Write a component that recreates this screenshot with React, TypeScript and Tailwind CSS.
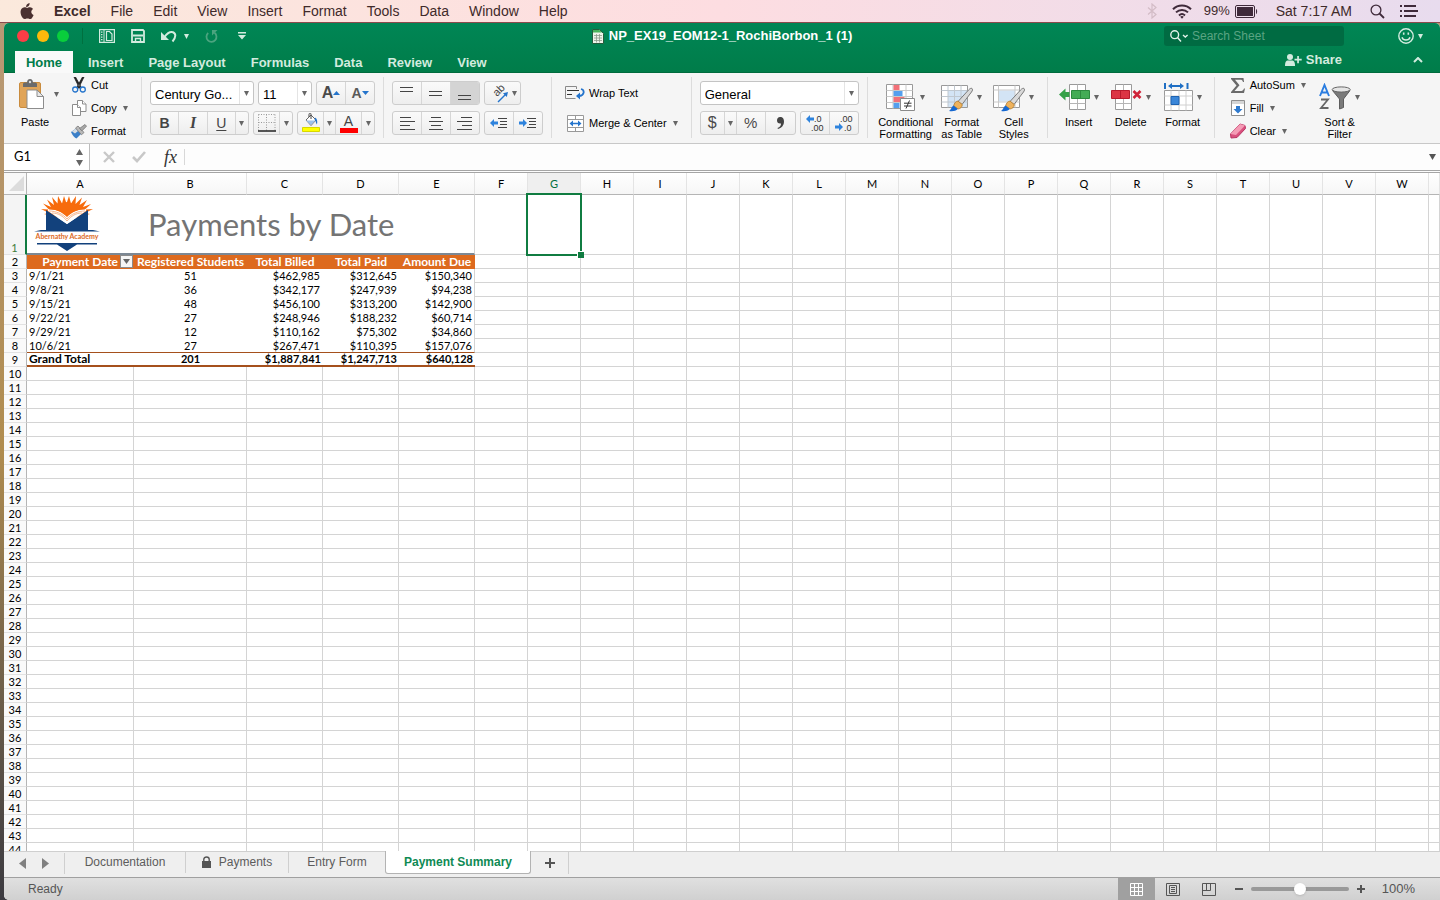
import React from 'react'

const menus = ['File', 'Edit', 'View', 'Insert', 'Format', 'Tools', 'Data', 'Window', 'Help']
const ribbonTabs = ['Insert', 'Page Layout', 'Formulas', 'Data', 'Review', 'View']
const extraColumns = 'FGHIJKLMNOPQRSTUVW'.split('')
const columns = ['A', 'B', 'C', 'D', 'E', ...extraColumns, '']

const payments = [
  ['9/1/21', '51', '$462,985', '$312,645', '$150,340'],
  ['9/8/21', '36', '$342,177', '$247,939', '$94,238'],
  ['9/15/21', '48', '$456,100', '$313,200', '$142,900'],
  ['9/22/21', '27', '$248,946', '$188,232', '$60,714'],
  ['9/29/21', '12', '$110,162', '$75,302', '$34,860'],
  ['10/6/21', '27', '$267,471', '$110,395', '$157,076'],
]
const total = ['Grand Total', '201', '$1,887,841', '$1,247,713', '$640,128']
const emptyRows = Array.from({ length: 35 }, (_, i) => i + 10)

const Arrow: React.FC<{ className?: string }> = ({ className = 'text-[#666]' }) => (
  <svg className={`w-[5px] h-[5px] shrink-0 ${className}`} viewBox="0 0 5 5" fill="currentColor" aria-hidden="true">
    <path d="M0 0h5L2.5 5z" />
  </svg>
)

/* Menu bar */

const AppleIcon = () => (
  <svg width="14" height="17" viewBox="0 0 14 17" fill="#4a3030" aria-hidden="true">
    <path d="M9.6 0c.1 1.300-.4 2.300-1 3-.7.800-1.600 1.200-2.500 1.100C6 2.900 6.500 2 7.100 1.300 7.800.6 8.700.1 9.600 0z" />
    <path d="M7.200 5c.6 0 1.500-.8 2.900-.7 1.100.1 2.200.6 2.900 1.600-2.500 1.600-2.100 5 .6 6-.6 1.600-1.800 4-3.200 4.100-1.100.1-1.500-.6-2.900-.6s-1.800.6-2.900.6C2.900 15.900.8 12.600.6 9.700.4 6.600 2.200 4.400 4.500 4.300 5.800 4.300 6.600 5 7.200 5z" />
  </svg>
)

const MenuBar = () => (
  <header className="h-[23px] shrink-0 flex items-center pl-5 pr-[22px] border-b border-[#8a4a4c] bg-linear-to-r from-[#fbe9dc] via-[#fddde1] to-[#e8dcee] text-sm text-[#3f2a2a]">
    <button aria-label="Apple menu"><AppleIcon /></button>
    <nav className="flex items-center gap-5 ml-5">
      <button className="font-bold">Excel</button>
      {menus.map((m) => (
        <button key={m}>{m}</button>
      ))}
    </nav>
    <div className="ml-auto flex items-center">
      <svg width="10" height="16" viewBox="0 0 10 16" fill="none" stroke="#d3bcc6" strokeWidth="1.200" aria-hidden="true">
        <path d="M1 4.500l8 7L5 15V1l4 3.500-8 7" />
      </svg>
      <svg className="ml-[15px]" width="20" height="15" viewBox="0 0 20 15" fill="none" stroke="#3f2a3a" strokeWidth="2" aria-hidden="true">
        <path d="M1 5.200c5-5 13-5 18 0M4 8.400c3.400-3.300 8.600-3.300 12 0M7 11.400c1.800-1.600 4.200-1.600 6 0" />
        <path d="M8.200 12.700L10 14.800l1.800-2.100c-1-.9-2.600-.9-3.600 0z" fill="#3f2a3a" stroke="none" />
      </svg>
      <span className="ml-3 text-[13px]">99%</span>
      <svg className="ml-[5px]" width="23" height="13" viewBox="0 0 23 13" aria-hidden="true">
        <rect x=".5" y=".5" width="19" height="12" rx="1.500" fill="none" stroke="#3f2a3a" />
        <rect x="2" y="2" width="16" height="9" fill="#3f2a3a" />
        <path d="M21 4c1.500.5 1.500 4.500 0 5z" fill="#3f2a3a" />
      </svg>
      <span className="ml-[18px]">Sat 7:17 AM</span>
      <button className="ml-[18px]" aria-label="Spotlight">
        <svg width="15" height="15" viewBox="0 0 15 15" fill="none" stroke="#3f2a3a" strokeWidth="1.300">
          <circle cx="6" cy="6" r="4.900" />
          <path d="M9.500 9.500L14 14" strokeWidth="1.800" />
        </svg>
      </button>
      <button className="ml-[15px]" aria-label="Notification Center">
        <svg width="18" height="12" viewBox="0 0 18 12" fill="#3f2a3a">
          <path d="M0 0h2v2H0zM4 0h12v2H4zM0 5h2v2H0zM4 5h14v2H4zM0 10h2v2H0zM4 10h12v2H4z" />
        </svg>
      </button>
    </div>
  </header>
)

/* Title bar and ribbon tabs */

const TitleBar = () => (
  <div className="h-7 pb-[2px] grid grid-cols-[1fr_auto_1fr] items-center text-[#d3ebdf]">
    <div className="flex items-center pl-[13px]">
      <div className="flex gap-2">
        <button aria-label="Close" className="w-3 h-3 rounded-full bg-[#fc3d46]" />
        <button aria-label="Minimize" className="w-3 h-3 rounded-full bg-[#fdb90b]" />
        <button aria-label="Zoom" className="w-3 h-3 rounded-full bg-[#09ce3c]" />
      </div>
      <span className="w-px h-4 ml-[13px] bg-[#00703f]" />
      <button className="ml-4" aria-label="Workbook gallery">
        <svg width="16" height="14" viewBox="0 0 16 14">
          <path d="M.6.6h14.800v12.800H.6z" fill="none" stroke="currentColor" strokeWidth="1.200" />
          <path d="M5 1v12" stroke="currentColor" strokeWidth="1" />
          <path d="M2 2.500h1.500v1.300H2zM2 5h1.500v1.300H2zM2 7.500h1.500v1.300H2zM2 10h1.500v1.300H2z" fill="currentColor" />
          <path d="M7.500 2.500h3l2.500 2.500v6.500H7.500z" fill="none" stroke="currentColor" strokeWidth="1.200" />
        </svg>
      </button>
      <button className="ml-4" aria-label="Save">
        <svg width="14" height="14" viewBox="0 0 14 14" fill="none" stroke="currentColor" strokeWidth="1.800">
          <path d="M1 1h11l1 1v11H1z" />
          <path d="M2 6.500h10" />
          <path d="M4.500 13V9.500h5V13" strokeWidth="1.400" />
        </svg>
      </button>
      <button className="ml-4" aria-label="Undo">
        <svg width="16" height="13" viewBox="0 0 16 13">
          <path d="M0 2v8h8z" fill="currentColor" />
          <path d="M3.500 7C6 3.500 9 1.200 12 2.200c3 1.200 3.200 5-.5 9.300" fill="none" stroke="currentColor" strokeWidth="2" />
        </svg>
      </button>
      <Arrow className="ml-[7px] text-[#d3ebdf]" />
      <button className="ml-4 text-[#4ba47f]" aria-label="Repeat">
        <svg width="13" height="13" viewBox="0 0 13 13">
          <path d="M3.200 3A5 5 0 1 0 9.500 2.800" fill="none" stroke="currentColor" strokeWidth="1.800" />
          <path d="M7 0h5.500L7 5.500z" fill="currentColor" />
        </svg>
      </button>
      <button className="ml-5" aria-label="Customize toolbar">
        <svg width="8" height="8" viewBox="0 0 8 8" fill="currentColor">
          <path d="M0 0h8v1.500H0zM0 3h8L4 7.500z" />
        </svg>
      </button>
    </div>
    <div className="flex items-center gap-[5px] text-white">
      <svg width="12" height="15" viewBox="0 0 12 15" aria-hidden="true">
        <path d="M.5.5h7l4 4v10H.5z" fill="#eef3ea" stroke="#245c3c" />
        <path d="M1 1h6.500L10 3.500H1z" fill="#47b45b" />
        <path d="M2 6.500h8M2 9h8M2 11.500h8M4.500 5v8.500M7.500 5v8.500" stroke="#8c9a8c" strokeWidth=".8" />
      </svg>
      <h1 className="text-[13px] font-bold">NP_EX19_EOM12-1_RochiBorbon_1 (1)</h1>
    </div>
    <div className="flex items-center justify-end pr-[17px]">
      <label className="flex items-center w-[180px] h-5 pl-[6px] rounded-[3px] bg-[#006b42]">
        <svg className="shrink-0" width="19" height="12" viewBox="0 0 19 12" fill="none" stroke="#e2f2ea" strokeWidth="1.400" aria-hidden="true">
          <circle cx="4.700" cy="4.700" r="3.900" />
          <path d="M7.500 7.500L11 11.500M13 5l2.300 2L17.600 5" />
        </svg>
        <input aria-label="Search Sheet" placeholder="Search Sheet" className="w-full ml-[3px] bg-transparent text-xs outline-none placeholder:text-[#5aa482]" />
      </label>
      <button className="ml-[54px] flex items-center gap-1" aria-label="Feedback">
        <svg width="16" height="16" viewBox="0 0 16 16" fill="none" stroke="currentColor" strokeWidth="1.400">
          <circle cx="8" cy="8" r="7.200" />
          <path d="M4 9.200c1 3.700 7 3.700 8 0" />
          <path d="M5.700 4.500v2.200M10.300 4.500v2.200" strokeWidth="1.600" />
        </svg>
        <Arrow className="text-[#d3ebdf]" />
      </button>
    </div>
  </div>
)

const TabStrip = () => (
  <div className="h-[22px] flex items-stretch pl-[11px] pr-[17px] text-[13px] font-bold text-[#d3ebdf] border-b border-[#006b3d]">
    <button className="w-[58px] pt-[2px] -mb-px mr-[3px] bg-[#f9f9f9] text-[#007c49]">Home</button>
    <nav className="flex gap-px">
      {ribbonTabs.map((t) => (
        <button key={t} className="px-3 pt-[2px]">{t}</button>
      ))}
    </nav>
    <button className="ml-auto mb-1 flex items-center gap-1">
      <svg width="17" height="12" viewBox="0 0 17 12" fill="currentColor" aria-hidden="true">
        <circle cx="5" cy="3" r="3" />
        <path d="M0 12c0-4 1-5.500 3-5.500h4c2 0 3 1.500 3 5.500z" />
        <path d="M12.200 2h1.700v2.800h2.800v1.700h-2.800v2.800h-1.700V6.500H9.500V4.800h2.700z" />
      </svg>
      Share
    </button>
    <button className="ml-[71px] mb-1" aria-label="Collapse ribbon">
      <svg width="10" height="6" viewBox="0 0 10 6" fill="none" stroke="currentColor" strokeWidth="2">
        <path d="M1 5l4-4 4 4" />
      </svg>
    </button>
  </div>
)

/* Ribbon building blocks */

const Group: React.FC<{ className?: string; children: React.ReactNode }> = ({ className = '', children }) => (
  <div className={`h-[61px] shrink-0 flex border-r border-[#dcdcdc] ${className}`}>{children}</div>
)

const Box: React.FC<{ className?: string; children: React.ReactNode }> = ({ className = '', children }) => (
  <div className={`h-6 flex items-stretch rounded-[3px] border border-[#cdcdcd] bg-linear-to-b from-[#fafafa] to-[#eeeeee] divide-x divide-[#d6d6d6] ${className}`}>
    {children}
  </div>
)

const Tool: React.FC<{ label: string; className?: string; children: React.ReactNode }> = ({ label, className = 'flex-1', children }) => (
  <button aria-label={label} title={label} className={`flex items-center justify-center ${className}`}>
    {children}
  </button>
)

const Drop: React.FC<{ label: string }> = ({ label }) => (
  <Tool label={label} className="w-3">
    <Arrow />
  </Tool>
)

const Picker: React.FC<{ label: string; value: string; className: string }> = ({ label, value, className }) => (
  <div className={`relative h-6 rounded-[3px] border border-[#c4c4c4] bg-white ${className}`}>
    <select aria-label={label} className="appearance-none w-full h-full pl-1 pr-4 pb-[2px] text-[13px] text-black outline-none">
      <option>{value}</option>
    </select>
    <span className="absolute right-0 top-0 h-full w-[14px] flex items-center justify-center border-l border-[#e4e4e4] pointer-events-none">
      <Arrow />
    </span>
  </div>
)

const BigTool: React.FC<{ lines: string[]; className?: string; icon: React.ReactNode }> = ({ lines, className = 'w-[52px]', icon }) => (
  <button className={`shrink-0 flex flex-col items-center justify-start pt-[5px] ${className}`}>
    <span className="h-[30px] mb-1 shrink-0 flex items-center gap-1">
      {icon}
      <Arrow />
    </span>
    {lines.map((l) => (
      <span key={l} className="text-[11px] leading-[12px] whitespace-nowrap">{l}</span>
    ))}
  </button>
)

const RowTool: React.FC<{ label: string; arrow?: boolean; wide?: boolean; icon: React.ReactNode }> = ({ label, arrow, wide, icon }) => (
  <button className="h-4 flex items-center text-[11px] whitespace-nowrap">
    <span className={`flex justify-center mr-1 ${wide ? 'w-5' : 'w-4'}`}>{icon}</span>
    {label}
    {arrow && <Arrow className="ml-[6px] text-[#666]" />}
  </button>
)

const Lines: React.FC<{ d: string }> = ({ d }) => (
  <svg width="16" height="14" viewBox="0 0 16 14" stroke="#444" fill="none" aria-hidden="true">
    <path d={d} />
  </svg>
)

const BlueArrow: React.FC<{ x: number; y: number; right?: boolean }> = ({ x, y, right }) => (
  <path
    d={right ? `M${x + 8} ${y}l-4-4v2.500h-4v3h4V${y + 4}z` : `M${x} ${y}l4-4v2.500h4v3h-4V${y + 4}z`}
    fill="#2e83dd"
  />
)

/* Ribbon icons */

const PasteIcon = () => (
  <svg width="26" height="30" viewBox="0 0 26 30">
    <rect x=".5" y="3.500" width="21" height="25" rx="1.500" fill="#e0a458" stroke="#c98b3d" />
    <path d="M4 8V5c0-1 1-1.500 2.500-1.500H8C8 1 9.500 0 11 0s3 1 3 3.500h1.500C17 3.500 18 4 18 5v3z" fill="#6b6b6b" />
    <circle cx="11" cy="3" r="1.200" fill="#ddd" />
    <path d="M8 11h10l6.500 6.500V29.500H8z" fill="#fff" stroke="#8d8d8d" />
    <path d="M18 11v6.500h6.500z" fill="#e8e8e8" stroke="#8d8d8d" />
  </svg>
)

const CutIcon = () => (
  <svg width="14" height="16" viewBox="0 0 14 16" fill="none">
    <path d="M2 0l1.500 0 5.500 10-1.500 1.200zM12 0l-1.500 0L5 10l1.500 1.200z" fill="#222" stroke="#222" strokeWidth=".8" />
    <circle cx="3.200" cy="12.500" r="2.500" stroke="#2474cc" strokeWidth="1.300" />
    <circle cx="10.800" cy="12.500" r="2.500" stroke="#2474cc" strokeWidth="1.300" />
  </svg>
)

const CopyIcon = () => (
  <svg width="15" height="16" viewBox="0 0 15 16" fill="#fff" stroke="#8c8c8c">
    <path d="M5.500.5h5l3.500 3.500v7.500H5.500z" />
    <path d="M10.500.5V4H14" />
    <path d="M.5 4.500h5l3 3v8h-8z" />
    <path d="M5.500 4.500v3h3" />
  </svg>
)

const BrushIcon = () => (
  <svg width="16" height="15" viewBox="0 0 16 15">
    <path d="M0 8l5-3.500 5 5.500-4.500 4.500C3.500 14 2 12 0 8z" fill="#3b7fc8" />
    <path d="M1 7.500L5 4.500l2 2.500-3 2.500z" fill="#d7dde3" />
    <path d="M4.500 4L7 2l6 6.500-2.500 2.200z" fill="#b9b9b9" stroke="#777" strokeWidth=".8" />
    <path d="M8.500 4.500L14 .5l1.500 1.700-4.500 4.600z" fill="#a8a8a8" stroke="#777" strokeWidth=".8" />
  </svg>
)

const PaintBrush = () => (
  <g>
    <path d="M31 5.500c1 .7.600 2-.5 3.500L21 21.500l-4-3L27.500 7c1.500-1.500 2.600-2.100 3.500-1.500z" fill="#d9d9d9" stroke="#7a7a7a" />
    <path d="M17 18l4.300 3.600c-.3 2.700-1.800 4-4.300 4.400l-4.300-3.200c.6-2.800 2-4.400 4.300-4.800z" fill="#eeb25c" stroke="#b07a2c" strokeWidth=".8" />
    <path d="M12.500 22.500l4.300 3.500c-2 2-5 2.700-8.800 2 2-1 2.300-4 4.500-5.500z" fill="#1668d0" />
  </g>
)

const ConditionalIcon = () => (
  <svg width="30" height="29" viewBox="0 0 30 29">
    <path d="M.5 1.500h26v24H.5z" fill="#fff" stroke="#9a9a9a" />
    <path d="M.5 7.500h26M.5 13.500h26M.5 19.500h26M7 1.500v24M20 1.500v24" stroke="#c9c9c9" fill="none" />
    <path d="M7.500 2h6v5h-6z" fill="#f27078" />
    <path d="M7.500 8h9v5h-9z" fill="#559fee" />
    <path d="M7.500 14h11v5h-11z" fill="#f27078" />
    <path d="M7.500 20h6v5h-6z" fill="#559fee" />
    <path d="M14.500 15.500h14v12h-14z" fill="#fff" stroke="#8a8a8a" />
    <path d="M18 20.200h7.500M18 23h7.500M23.500 17.500l-3.500 8" stroke="#333" fill="none" />
  </svg>
)

const FormatTableIcon = () => (
  <svg width="32" height="29" viewBox="0 0 32 29">
    <path d="M.5 2.500h26v22H.5z" fill="#fff" stroke="#9a9a9a" />
    <path d="M7 8h19v16H7z" fill="#d3e4f5" />
    <path d="M.5 7.500h26M.5 13.500h26M.5 19h26M7 2.500v22M13.500 2.500v22M20 2.500v22" stroke="#c0c8d0" fill="none" />
    <PaintBrush />
  </svg>
)

const CellStylesIcon = () => (
  <svg width="32" height="29" viewBox="0 0 32 29">
    <path d="M.5 2.500h26v22H.5z" fill="#fff" stroke="#9a9a9a" />
    <path d="M6 7.500h16v11H6z" fill="#d3e4f5" />
    <path d="M.5 7h26M.5 19h26M5.500 2.500v22M22 2.500v22" stroke="#c9c9c9" fill="none" />
    <PaintBrush />
  </svg>
)

const InsertIcon = () => (
  <svg width="31" height="29" viewBox="0 0 31 29">
    <path d="M10.500 1.500h16v25h-16z" fill="#fff" stroke="#9a9a9a" />
    <path d="M18.500 1.500v25M10.500 20.500h16" stroke="#b5b5b5" />
    <path d="M12.500 7.500h18v8h-18z" fill="#43ac55" stroke="#2c8a3e" />
    <path d="M21.500 7.500v8" stroke="#2c8a3e" />
    <path d="M0 11.500L6.500 5.500v3.500h4v5h-4v3.500z" fill="#35a148" />
  </svg>
)

const DeleteIcon = () => (
  <svg width="31" height="29" viewBox="0 0 31 29">
    <path d="M4.500 1.500h16v25h-16z" fill="#fff" stroke="#9a9a9a" />
    <path d="M12.500 1.500v25M4.500 20.500h16" stroke="#b5b5b5" />
    <path d="M.5 7.500h18v8H.5z" fill="#dc3545" stroke="#b81c2e" />
    <path d="M9.500 7.500v8" stroke="#b81c2e" />
    <path d="M22.500 8l7 7M29.500 8l-7 7" stroke="#cf2338" strokeWidth="2.600" />
  </svg>
)

const FormatIcon = () => (
  <svg width="29" height="29" viewBox="0 0 29 29">
    <path d="M1 0v6M23.500 0v6" stroke="#1f6fc4" strokeWidth="2" />
    <path d="M4 3l4-3v2h8V0l4 3-4 3V4H8v2z" fill="#1f6fc4" />
    <path d="M.5 7.500h28v20H.5z" fill="#fff" stroke="#9a9a9a" />
    <path d="M.5 13h28M.5 22h28M7 7.500v20M15 7.500v20M22 7.500v20" stroke="#d0d0d0" fill="none" />
    <path d="M7 13.500h8v8H7z" fill="#3a86d8" stroke="#1f63b0" />
  </svg>
)

const SortIcon = () => (
  <svg width="32" height="28" viewBox="0 0 32 28">
    <path d="M1 13L5.500 2l4.500 11M2.700 9.500h5.600" fill="none" stroke="#2b7de0" strokeWidth="1.900" />
    <path d="M2 16.500h7L2 25h7.500" fill="none" stroke="#666" strokeWidth="1.800" />
    <path d="M13.500 7.500h17.500l-6.500 8.500v8.500l-4 1.500V16z" fill="#7a7a7a" stroke="#5d5d5d" />
    <ellipse cx="22.200" cy="6.500" rx="9" ry="2.600" fill="#e5e5e5" stroke="#666" />
  </svg>
)

const Ribbon = () => (
  <div className="h-[71px] shrink-0 flex pt-1 overflow-hidden border-b border-[#c8c8c8] bg-[#f5f5f5] text-black">
    <Group className="w-[138px] pl-[13px]">
      <button className="w-[42px] flex flex-col items-start pt-[2px] mr-3">
        <span className="flex items-center gap-[9px] mb-[7px] pl-[2px]">
          <PasteIcon />
          <Arrow />
        </span>
        <span className="text-[11px] leading-[12px] pl-1">Paste</span>
      </button>
      <div className="flex flex-col gap-[7px]">
        <RowTool label="Cut" icon={<CutIcon />} />
        <RowTool label="Copy" arrow icon={<CopyIcon />} />
        <RowTool label="Format" icon={<BrushIcon />} />
      </div>
    </Group>

    <Group className="px-2 pt-1 flex-col gap-[6px]">
      <div className="flex gap-1">
        <Picker label="Font" value="Century Go..." className="w-[104px]" />
        <Picker label="Font size" value="11" className="w-[54px]" />
        <Box className="w-[59px]">
          <Tool label="Increase font size">
            <span className="text-base font-bold text-[#4a4a4a]">A</span>
            <svg width="7" height="4" viewBox="0 0 7 4" fill="#2474cc"><path d="M0 4h7L3.500 0z" /></svg>
          </Tool>
          <Tool label="Decrease font size">
            <span className="text-sm font-bold text-[#5a5a5a]">A</span>
            <svg width="7" height="4" viewBox="0 0 7 4" fill="#2474cc"><path d="M0 0h7L3.500 4z" /></svg>
          </Tool>
        </Box>
      </div>
      <div className="flex gap-1 text-[#444]">
        <Box className="w-[99px]">
          <Tool label="Bold"><span className="text-sm font-bold">B</span></Tool>
          <Tool label="Italic"><span className="font-['Liberation_Serif',serif] text-base italic font-bold">I</span></Tool>
          <Tool label="Underline"><span className="text-sm underline underline-offset-2">U</span></Tool>
          <Drop label="Underline style" />
        </Box>
        <Box className="w-10">
          <Tool label="Borders">
            <svg width="18" height="18" viewBox="0 0 18 18" fill="none">
              <path d="M.5 .5h17M.5 8.500h17M.5 .5v16M8.500 .5v16M17 .5v16" stroke="#999" strokeDasharray="1 1.500" />
              <path d="M0 17h18" stroke="#222" strokeWidth="1.500" />
            </svg>
          </Tool>
          <Drop label="Border style" />
        </Box>
        <Box className="w-[78px]">
          <Tool label="Fill color">
            <svg width="18" height="20" viewBox="0 0 18 20">
              <path d="M4 7l5-5 5 5-5 5.500z" fill="#fff" stroke="#666" />
              <path d="M4 7.500h9.500L9 12z" fill="#9dc3ec" />
              <path d="M9 6V1.500C9-.5 7-.2 7 1.500V4" fill="none" stroke="#444" />
              <path d="M13 4.500c2 1 2.700 3.500 2 7-1.500-1.500-1-4-2.500-5z" fill="#2474cc" />
              <path d="M.5 14.500h17v4H.5z" fill="#ff0" stroke="#d8d800" />
            </svg>
          </Tool>
          <Drop label="Fill color options" />
          <Tool label="Font color">
            <span className="flex flex-col items-center">
              <span className="text-sm leading-[14px]">A</span>
              <span className="w-[18px] h-[5px] bg-[#f00]" />
            </span>
          </Tool>
          <Drop label="Font color options" />
        </Box>
      </div>
    </Group>

    <Group className="px-2 pt-1 flex-col gap-[6px]">
      <div className="flex gap-1">
        <Box className="w-[88px]">
          <Tool label="Top align"><Lines d="M1 1.500h13M1 5.500h13" /></Tool>
          <Tool label="Middle align"><Lines d="M1 5.500h13M1 9.500h13" /></Tool>
          <Tool label="Bottom align" className="flex-1 rounded-r-[2px] bg-[#d4d4d4]"><Lines d="M1 9.500h13M1 13.500h13" /></Tool>
        </Box>
        <button aria-label="Orientation" className="w-[37px] h-6 flex items-center justify-center gap-[3px] rounded-[3px] border border-[#cdcdcd] bg-linear-to-b from-[#fafafa] to-[#eeeeee]">
          <svg className="overflow-visible" width="20" height="20" viewBox="0 0 20 20">
            <text transform="translate(8 14) rotate(-45)" fontSize="11" fill="#444">ab</text>
            <path d="M9 19l7.500-7.500" stroke="#2474cc" strokeWidth="1.500" />
            <path d="M19 9l-1.200 5-3.800-3.800z" fill="#2474cc" />
          </svg>
          <Arrow />
        </button>
      </div>
      <div className="flex gap-1">
        <Box className="w-[88px]">
          <Tool label="Align left"><Lines d="M1 1.500h11M1 5.500h15M1 9.500h10M1 13.500h15" /></Tool>
          <Tool label="Center"><Lines d="M3 1.500h10M1 5.500h14M3 9.500h10M1 13.500h14" /></Tool>
          <Tool label="Align right"><Lines d="M4 1.500h11M0 5.500h15M5 9.500h10M0 13.500h15" /></Tool>
        </Box>
        <Box className="w-[59px]">
          <Tool label="Decrease indent">
            <svg width="18" height="12" viewBox="0 0 18 12" fill="none">
              <path d="M8 1.500h9M10 4.500h7M10 7.500h7M8 10.500h9" stroke="#444" />
              <BlueArrow x={0} y={6} />
            </svg>
          </Tool>
          <Tool label="Increase indent">
            <svg width="18" height="12" viewBox="0 0 18 12" fill="none">
              <path d="M8 1.500h9M10 4.500h7M10 7.500h7M8 10.500h9" stroke="#444" />
              <BlueArrow x={0} y={6} right />
            </svg>
          </Tool>
        </Box>
      </div>
    </Group>

    <Group className="px-[13px] pt-2 flex-col gap-[14px]">
      <RowTool
        wide
        label="Wrap Text"
        icon={
          <svg width="20" height="14" viewBox="0 0 20 14" fill="none">
            <path d="M11.500 3V.5H.5v12h10" stroke="#8a8a8a" />
            <path d="M2 4.500h12M2 8.500h5" stroke="#333" />
            <path d="M16 3c4 1 3.500 6.500-1.500 7" stroke="#2474cc" strokeWidth="1.800" />
            <path d="M11 10l4-3.500v7z" fill="#2474cc" />
          </svg>
        }
      />
      <RowTool
        wide
        arrow
        label="Merge & Center"
        icon={
          <svg width="17" height="17" viewBox="0 0 17 17" fill="none">
            <path d="M.5.5h16v16H.5z" fill="#fff" stroke="#999" />
            <path d="M.5 4.500h16M.5 12.500h16M8.500.5v4M8.500 12.500v4" stroke="#999" />
            <path d="M4 8.500h9" stroke="#2474cc" strokeWidth="1.400" />
            <path d="M2.500 8.500l3.500-3v6zM14.500 8.500l-3.500-3v6z" fill="#2474cc" />
          </svg>
        }
      />
    </Group>

    <Group className="px-2 pt-1 flex-col gap-[6px]">
      <Picker label="Number format" value="General" className="w-[159px]" />
      <div className="flex gap-1 text-[#4a4a4a]">
        <Box className="w-[96px]">
          <Tool label="Accounting format"><span className="text-base">$</span></Tool>
          <Drop label="Accounting options" />
          <Tool label="Percent style" className="w-[29px]"><span className="text-[15px]">%</span></Tool>
          <Tool label="Comma style" className="w-[29px]">
            <svg width="7" height="12" viewBox="0 0 7 12" fill="#444"><path d="M3 0c3 0 4 2 4 4.500C7 8.500 4.500 11 1 12l-.5-1C3 10 4 8.500 4 6.500 1.500 7 0 5.500 0 3.500 0 1.500 1.200 0 3 0z" /></svg>
          </Tool>
        </Box>
        <Box className="w-[59px]">
          <Tool label="Increase decimal">
            <svg width="20" height="18" viewBox="0 0 20 18" fill="#333" fontSize="9">
              <BlueArrow x={1} y={5} />
              <text x="9" y="8">.0</text>
              <text x="6" y="17">.00</text>
            </svg>
          </Tool>
          <Tool label="Decrease decimal">
            <svg width="20" height="18" viewBox="0 0 20 18" fill="#333" fontSize="9">
              <BlueArrow x={1} y={13} right />
              <text x="6" y="8">.00</text>
              <text x="10" y="17">.0</text>
            </svg>
          </Tool>
        </Box>
      </div>
    </Group>

    <Group className="pl-2 pr-[7px]">
      <BigTool className="w-[60px]" lines={['Conditional', 'Formatting']} icon={<ConditionalIcon />} />
      <BigTool lines={['Format', 'as Table']} icon={<FormatTableIcon />} />
      <BigTool lines={['Cell', 'Styles']} icon={<CellStylesIcon />} />
    </Group>

    <Group className="px-[5px]">
      <BigTool lines={['Insert']} icon={<InsertIcon />} />
      <BigTool lines={['Delete']} icon={<DeleteIcon />} />
      <BigTool lines={['Format']} icon={<FormatIcon />} />
    </Group>

    <div className="flex shrink-0 pl-[15px]">
      <div className="w-[84px] flex flex-col items-start gap-[7px]">
        <RowTool
          arrow
          label="AutoSum"
          icon={
            <svg width="14" height="15" viewBox="0 0 14 15">
              <path d="M0 0h12.500l.5 4h-1c-.5-1.700-1-2.200-3-2.200H4l4.500 5.400L3.500 13H9c2.500 0 3.200-.6 4-2.500h1L13 15H0v-1l5.500-6.500L0 1z" fill="#6a6a6a" />
            </svg>
          }
        />
        <RowTool
          arrow
          label="Fill"
          icon={
            <svg width="14" height="16" viewBox="0 0 14 16">
              <path d="M.5.5h13v15H.5z" fill="#fff" stroke="#8f8f8f" />
              <path d="M1 1h12v3H1z" fill="#d5d5d5" />
              <path d="M5 6h4v3h2.500L7 13.500 2.500 9H5z" fill="#2f7ace" />
            </svg>
          }
        />
        <RowTool
          arrow
          label="Clear"
          icon={
            <svg width="16" height="16" viewBox="0 0 16 16">
              <path d="M10 1l5 1.500.5 3L7 14.500 1 15l-.5-4z" fill="#d94f7d" stroke="#b83463" />
              <path d="M10 1l5 1.500L6 12 .5 11z" fill="#f49bb5" />
            </svg>
          }
        />
      </div>
      <BigTool lines={['Sort &', 'Filter']} icon={<SortIcon />} />
    </div>
  </div>
)

const FormulaBar = () => (
  <div className="h-[29px] shrink-0 flex items-stretch bg-[#fdfdfd] border-b-[3px] border-double border-[#a5a5a5]">
    <div className="w-[86px] flex items-center justify-between pl-[10px] pr-[6px] border-r border-[#bcbcbc] bg-white">
      <input aria-label="Name Box" defaultValue="G1" className="w-12 font-['Lato',sans-serif] text-[13px] text-black outline-none" />
      <svg width="7" height="17" viewBox="0 0 7 17" fill="#666" aria-hidden="true">
        <path d="M0 6h7L3.500 0zM0 11h7l-3.500 6z" />
      </svg>
    </div>
    <button className="ml-[13px]" aria-label="Cancel">
      <svg width="12" height="12" viewBox="0 0 12 12" stroke="#c8c8c8" strokeWidth="2.400" fill="none"><path d="M1 1l10 10M11 1L1 11" /></svg>
    </button>
    <button className="ml-[17px]" aria-label="Enter">
      <svg width="14" height="12" viewBox="0 0 14 12" stroke="#c8c8c8" strokeWidth="2.600" fill="none"><path d="M1 6l4 4L13 1" /></svg>
    </button>
    <button className="ml-[18px] font-['Liberation_Serif',serif] italic text-lg leading-none text-[#333]" aria-label="Insert function">fx</button>
    <span className="w-px h-4 self-center ml-[7px] bg-[#d8d8d8]" />
    <input aria-label="Formula" className="flex-1 min-w-0 px-2 text-sm outline-none" />
    <button className="w-4 flex items-center justify-center" aria-label="Expand formula bar">
      <svg width="7" height="6" viewBox="0 0 7 6" fill="#555"><path d="M0 0h7L3.500 6z" /></svg>
    </button>
  </div>
)

/* Worksheet */

const AcademyLogo = () => (
  <svg width="76" height="57" viewBox="0 0 76 57" role="img" aria-label="Abernathy Academy">
    <path
      d="M38 25L15 19l5-1-8-4 8 .5-6-6 8 3.500-4-7.500 7 5.500-2-8 5.500 6.500L29 1l4 7.500L35 1l2.500 7.500L40 1l2 7.500L47 1l-.5 8L53 2.500 50.500 10 58 5l-4 7 8-3-6 5.500 8-.5-8 4 5 1z"
      fill="#f76b0c"
    />
    <path d="M17 15l21 14 21-14v20H17z" fill="#12417c" />
    <path d="M19 14c8 0 14 3 19 8 5-5 11-8 19-8v2L38 29 19 16z" fill="#fff" />
    <path d="M20 14.500c7-.5 13 2 18 6.500 5-4.500 11-7 18-6.500l-3-3.500-15-4-15 4z" fill="#f76b0c" />
    <path d="M20 16c7 0 14 3 18 8 4-5 11-8 18-8M23 18c6 0 11 3 15 8 4-5 9-8 15-8" fill="none" stroke="#f29a62" strokeWidth=".7" />
    <path d="M5 36.500l7-1.500h5v-2l2 2h38l2-2v2h5l7 1.500z" fill="#12417c" />
    <text x="38" y="44" textAnchor="middle" className="font-['Lato',sans-serif] text-[7px] font-bold" fill="#dc6a1e">Abernathy Academy</text>
    <path d="M8 48h60v1.500H48L38 56l-10-6.500H8z" fill="#12417c" />
  </svg>
)

const RowHead: React.FC<{ n: number }> = ({ n }) => (
  <th scope="row" className="h-[14px] p-0 border-r border-r-[#b5b5b5] border-b border-b-[#e2e2e2] bg-[#fafafa] font-normal text-center">
    {n}
  </th>
)

const Blank: React.FC<{ count?: number }> = ({ count = columns.length }) => (
  <>
    {Array.from({ length: count }, (_, i) => (
      <td key={i} className="p-0 border-r border-b border-[#d4d4d4]" />
    ))}
  </>
)

const rightSide = extraColumns.length + 1

const Sheet = () => (
  <main className="flex-1 min-h-0 overflow-hidden bg-white">
    <table className="w-full table-fixed border-separate border-spacing-0 font-['Century_Gothic','Lato',sans-serif] text-[11px] leading-[13px] text-black">
      <colgroup>
        <col className="w-[23px]" />
        <col className="w-[107px]" />
        <col className="w-[113px]" />
        <col className="w-[76px]" />
        <col className="w-[76px]" />
        <col className="w-[76px]" />
        {extraColumns.map((c) => (
          <col key={c} className="w-[53px]" />
        ))}
        <col />
      </colgroup>
      <thead>
        <tr>
          <th className="h-[22px] p-0 border-r border-b border-[#b5b5b5] bg-[#f8f8f8]">
            <svg className="ml-auto mr-[2px]" width="15" height="15" viewBox="0 0 15 15" fill="#dcdcdc" aria-hidden="true"><path d="M15 0v15H0z" /></svg>
          </th>
          {columns.map((c) => (
            <th
              key={c}
              scope="col"
              className={`h-[22px] p-0 border-r border-r-[#e4e4e4] border-b border-b-[#b5b5b5] font-normal ${c === 'G' ? 'bg-[#efefef] text-[#00703f]' : 'bg-linear-to-b from-white to-[#f6f6f6]'}`}
            >
              {c}
            </th>
          ))}
        </tr>
      </thead>
      <tbody>
        <tr>
          <th scope="row" className="h-[60px] p-0 align-bottom border-r-2 border-r-[#107c41] border-b border-b-[#e2e2e2] bg-[#f4f4f4] font-normal text-[#3f7d3a]">1</th>
          <td colSpan={5} className="p-0 align-top border-r border-r-[#d4d4d4] border-b-2 border-b-[#7c8894]">
            <div className="flex items-center pl-[2px]">
              <AcademyLogo />
              <span className="ml-[43px] text-[31px] leading-[40px] text-[#747474]">Payments by Date</span>
            </div>
          </td>
          <Blank count={1} />
          <td className="relative p-0 border-r border-b border-[#d4d4d4]">
            <span className="absolute -top-[2px] -left-[2px] -right-[2px] -bottom-[2px] border-2 border-[#107c41]" />
            <span className="absolute -right-[4px] -bottom-[4px] w-[7px] h-[7px] border-t border-l border-white bg-[#107c41]" />
          </td>
          <Blank count={rightSide - 2} />
        </tr>
        <tr className="align-top">
          <RowHead n={2} />
          <td className="p-0 bg-[#dd6a1e] text-xs leading-[13px] font-bold text-white">
            <div className="flex items-center justify-end gap-[2px] pr-px">
              Payment Date
              <button aria-label="Filter Payment Date" className="w-[13px] h-[13px] flex items-center justify-center border border-[#8b8b8b] bg-[#f6f6f6]">
                <svg width="7" height="5" viewBox="0 0 7 5" fill="#666"><path d="M0 0h7L3.500 5z" /></svg>
              </button>
            </div>
          </td>
          {['Registered Students', 'Total Billed', 'Total Paid', 'Amount Due'].map((h) => (
            <td key={h} className="p-0 bg-[#dd6a1e] text-xs leading-[13px] font-bold text-white text-center whitespace-nowrap">{h}</td>
          ))}
          <Blank count={rightSide} />
        </tr>
        {payments.map(([date, students, billed, paid, due], i) => {
          const line = i === payments.length - 1 ? 'border-b border-b-[#a5501c]' : ''
          return (
            <tr key={date} className="align-top">
              <RowHead n={i + 3} />
              <td className={`p-0 pl-[2px] ${line}`}>{date}</td>
              <td className={`p-0 text-center ${line}`}>{students}</td>
              <td className={`p-0 pr-[3px] text-right ${line}`}>{billed}</td>
              <td className={`p-0 pr-[2px] text-right ${line}`}>{paid}</td>
              <td className={`p-0 pr-[2px] text-right border-r border-r-[#d4d4d4] ${line}`}>{due}</td>
              <Blank count={rightSide} />
            </tr>
          )
        })}
        <tr className="leading-[12px]">
          <RowHead n={9} />
          {total.map((t, i) => (
            <td
              key={t}
              className={`p-0 font-bold border-b-2 border-b-[#a5501c] ${i === 0 ? 'pl-[2px] text-xs leading-[12px]' : i === 1 ? 'text-center' : 'pr-[2px] text-right'}`}
            >
              {t}
            </td>
          ))}
          <Blank count={rightSide} />
        </tr>
        {emptyRows.map((n) => (
          <tr key={n}>
            <RowHead n={n} />
            <Blank />
          </tr>
        ))}
      </tbody>
    </table>
  </main>
)

const SheetTabs = () => (
  <nav className="h-[26px] shrink-0 flex items-start border-t border-[#cfcfcf] bg-[#efefef] text-xs text-[#5c5c5c]">
    <div className="w-[61px] h-[21px] mt-px flex items-center pl-[15px] gap-4 border-r border-[#cfcfcf]">
      <button aria-label="Previous sheet"><svg width="7" height="11" viewBox="0 0 7 11" fill="#808080"><path d="M7 0v11L0 5.500z" /></svg></button>
      <button aria-label="Next sheet"><svg width="7" height="11" viewBox="0 0 7 11" fill="#808080"><path d="M0 0v11l7-5.500z" /></svg></button>
    </div>
    <button className="w-[121px] h-[21px] pb-[2px] border-r border-[#cfcfcf]">Documentation</button>
    <button className="w-[103px] h-[21px] pb-[2px] flex items-center justify-center gap-2 border-r border-[#cfcfcf]">
      <svg width="9" height="12" viewBox="0 0 9 12" aria-hidden="true">
        <path d="M0 5h9v7H0z" fill="#555" />
        <path d="M1.800 5.500V3.300c0-3 5.400-3 5.400 0v2.200" fill="none" stroke="#555" strokeWidth="1.400" />
      </svg>
      Payments
    </button>
    <button className="w-24 h-[21px] pb-[2px]">Entry Form</button>
    <button className="w-[146px] h-[23px] -mt-px rounded-b-[3px] border border-t-0 border-[#b3b3b3] bg-white font-bold text-[#0f8a54]">Payment Summary</button>
    <button className="w-[38px] h-[22px] flex items-center justify-center border-r border-[#cfcfcf]" aria-label="Add sheet">
      <svg width="10" height="10" viewBox="0 0 10 10" fill="#555"><path d="M4 0h2v4h4v2H6v4H4V6H0V4h4z" /></svg>
    </button>
  </nav>
)

const StatusBar = () => (
  <footer className="h-[23px] shrink-0 flex items-center border-t border-[#a0a0a0] bg-linear-to-b from-[#e0e0e0] to-[#d0d0d0] text-xs text-[#555]">
    <span className="pl-6">Ready</span>
    <div className="ml-auto flex items-center h-full pr-[25px]">
      <button className="w-[37px] h-full flex items-center justify-center bg-[#a0a0a0]" aria-label="Normal view">
        <svg width="13" height="13" viewBox="0 0 13 13" fill="none" stroke="#fff"><path d="M.5.5h12v12H.5zM.5 4.500h12M.5 8.500h12M4.500.5v12M8.500.5v12" /></svg>
      </button>
      <button className="w-9 h-full flex items-center justify-center" aria-label="Page layout view">
        <svg width="14" height="13" viewBox="0 0 14 13" fill="none" stroke="#555"><path d="M.5.5h13v12H.5zM3.500 2.500h7v8h-7zM5 4.500h4M5 6.500h4M5 8.500h4" /></svg>
      </button>
      <button className="w-9 h-full flex items-center justify-center" aria-label="Page break view">
        <svg width="14" height="13" viewBox="0 0 14 13" fill="none" stroke="#555"><path d="M.5.5h13v12H.5zM.5 7.500h8V.5M4.500.5v7" /></svg>
      </button>
      <button className="ml-2" aria-label="Zoom out"><svg width="8" height="2" viewBox="0 0 8 2" fill="#555"><path d="M0 0h8v2H0z" /></svg></button>
      <input
        type="range"
        aria-label="Zoom level"
        min={0}
        max={200}
        defaultValue={100}
        className="w-[98px] h-1 ml-2 mr-2 appearance-none rounded-full bg-[#999] [&::-webkit-slider-thumb]:appearance-none [&::-webkit-slider-thumb]:w-3 [&::-webkit-slider-thumb]:h-3 [&::-webkit-slider-thumb]:rounded-full [&::-webkit-slider-thumb]:bg-white [&::-webkit-slider-thumb]:shadow"
      />
      <button aria-label="Zoom in"><svg width="8" height="8" viewBox="0 0 8 8" fill="#555"><path d="M3 0h2v3h3v2H5v3H3V5H0V3h3z" /></svg></button>
      <span className="ml-[17px] text-[13px]">100%</span>
    </div>
  </footer>
)

const App: React.FC = () => {
  return (
    <div className="h-screen flex flex-col overflow-hidden bg-linear-to-b from-[#b99a78] via-[#b08c4e] to-[#3b3a40] font-['Helvetica_Neue','Liberation_Sans',sans-serif]">
      <MenuBar />
      <div className="flex-1 min-h-0 ml-1 flex flex-col overflow-hidden rounded-t-[5px] rounded-bl-[5px] bg-white">
        <div className="shrink-0 bg-linear-to-b from-[#008655] to-[#007c49]">
          <TitleBar />
          <TabStrip />
        </div>
        <Ribbon />
        <FormulaBar />
        <Sheet />
        <SheetTabs />
        <StatusBar />
      </div>
    </div>
  )
}

export default App
